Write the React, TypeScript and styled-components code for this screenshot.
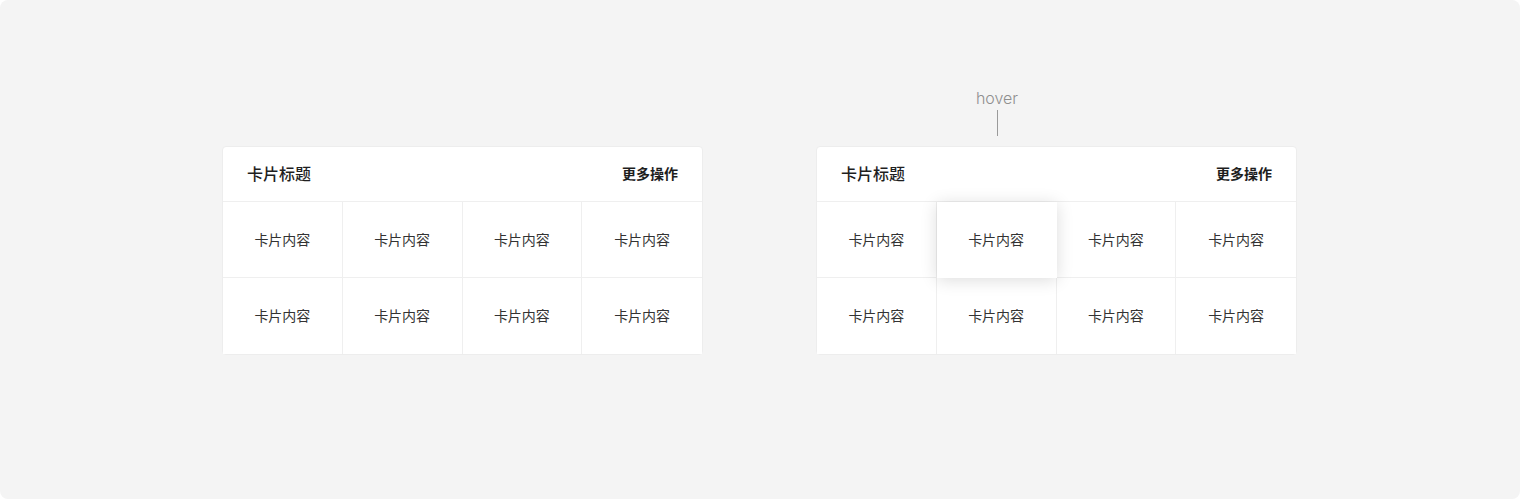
import React from 'react'
import styled, { createGlobalStyle } from 'styled-components'

const GlobalStyle = createGlobalStyle`
  html, body {
    margin: 0;
    padding: 0;
    background: #ffffff;
  }
  body {
    font-family: Inter, "Noto Sans CJK SC", sans-serif;
  }
`

const Canvas = styled.div`
  width: 1520px;
  height: 499px;
  box-sizing: border-box;
  background: #f4f4f4;
  border-radius: 8px;
  padding-top: 88px;
  display: flex;
  justify-content: center;
  gap: 114px;
`

const Column = styled.div`
  display: flex;
  flex-direction: column;
`

const AnnotationRow = styled.div`
  height: 58px;
  display: grid;
  grid-template-columns: repeat(4, 120px);
`

const Annotation = styled.div<{ $col: number }>`
  grid-column: ${p => p.$col};
  display: flex;
  flex-direction: column;
  align-items: center;
  margin-top: -1px;
`

const AnnotationLabel = styled.span`
  font-family: Inter, "Noto Sans", sans-serif;
  font-weight: 300;
  font-size: 16px;
  line-height: 22px;
  color: #8f8f8f;
`

const AnnotationTick = styled.span`
  width: 1px;
  height: 26px;
  margin-top: 1px;
  background: #9a9a9a;
`

const Card = styled.div`
  width: 481px;
  margin-left: -1px;
  box-sizing: border-box;
  background: #ffffff;
  border: 1px solid #ededed;
  border-radius: 4px;
`

const CardHeader = styled.div`
  height: 55px;
  box-sizing: border-box;
  display: flex;
  align-items: center;
  justify-content: space-between;
  padding: 0 24px 2px;
  border-bottom: 1px solid #efefef;
`

const CardTitle = styled.span`
  font-family: "Noto Sans CJK SC", sans-serif;
  font-size: 16px;
  font-weight: 500;
  color: #1f1f1f;
`

const CardAction = styled.span`
  font-family: "Noto Sans CJK SC", sans-serif;
  font-size: 14px;
  font-weight: 700;
  color: #1d1d1d;
`

const CardGrid = styled.div`
  display: grid;
  grid-template-columns: repeat(4, 1fr);
`

const Cell = styled.div<{ $hover?: boolean; $lastCol: boolean; $lastRow: boolean }>`
  position: relative;
  height: 76px;
  box-sizing: border-box;
  padding-bottom: 2px;
  display: flex;
  align-items: center;
  justify-content: center;
  font-family: "Noto Sans CJK SC", sans-serif;
  font-size: 14px;
  color: #333333;
  background: #ffffff;
  border-right: ${p => (p.$lastCol ? 'none' : '1px solid #efefef')};
  border-bottom: ${p => (p.$lastRow ? 'none' : '1px solid #efefef')};
  ${p =>
    p.$hover &&
    `
    z-index: 1;
    border-color: #ffffff;
    box-shadow: 0 2px 16px rgba(0, 0, 0, 0.14);
  `}
`

const CardBlock = ({ hoverIndex }: { hoverIndex?: number }) => (
  <Column>
    <AnnotationRow>
      {hoverIndex !== undefined && (
        <Annotation $col={(hoverIndex % 4) + 1}>
          <AnnotationLabel>hover</AnnotationLabel>
          <AnnotationTick />
        </Annotation>
      )}
    </AnnotationRow>
    <Card>
      <CardHeader>
        <CardTitle>卡片标题</CardTitle>
        <CardAction>更多操作</CardAction>
      </CardHeader>
      <CardGrid>
        {Array.from({ length: 8 }).map((_, i) => (
          <Cell
            key={i}
            $hover={i === hoverIndex}
            $lastCol={i % 4 === 3}
            $lastRow={i >= 4}
          >
            卡片内容
          </Cell>
        ))}
      </CardGrid>
    </Card>
  </Column>
)

export default function App() {
  return (
    <>
      <GlobalStyle />
      <Canvas>
        <CardBlock />
        <CardBlock hoverIndex={1} />
      </Canvas>
    </>
  )
}
